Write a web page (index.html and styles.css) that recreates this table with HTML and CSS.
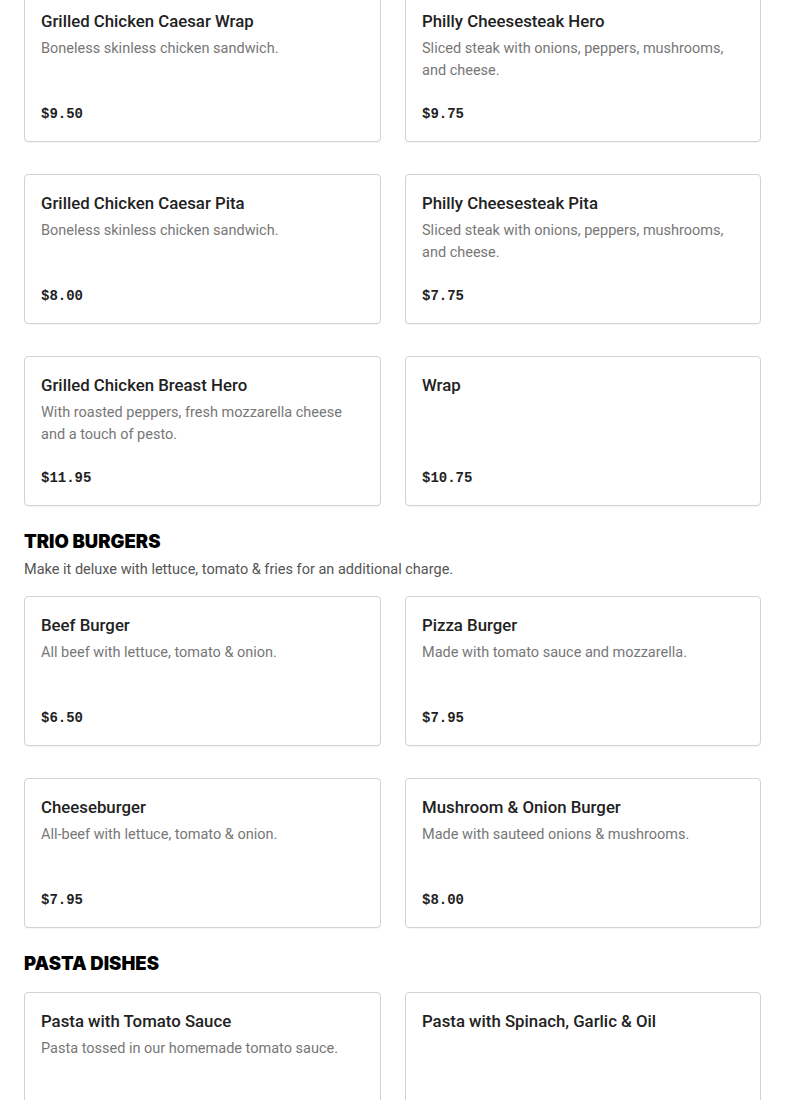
FILE: index.html
```html
<!DOCTYPE html>
<html lang="en">
<head>
<meta charset="utf-8">
<title>Menu</title>
<link rel="stylesheet" href="styles.css">
</head>
<body>
<main class="menu">
  <div class="grid grid-first">
    <div class="card"><h3 class="title">Grilled Chicken Caesar Wrap</h3><p class="desc">Boneless skinless chicken sandwich.</p><div class="price">$9.50</div></div>
    <div class="card"><h3 class="title">Philly Cheesesteak Hero</h3><p class="desc">Sliced steak with onions, peppers, mushrooms, and cheese.</p><div class="price">$9.75</div></div>
    <div class="card"><h3 class="title">Grilled Chicken Caesar Pita</h3><p class="desc">Boneless skinless chicken sandwich.</p><div class="price">$8.00</div></div>
    <div class="card"><h3 class="title">Philly Cheesesteak Pita</h3><p class="desc">Sliced steak with onions, peppers, mushrooms, and cheese.</p><div class="price">$7.75</div></div>
    <div class="card"><h3 class="title">Grilled Chicken Breast Hero</h3><p class="desc">With roasted peppers, fresh mozzarella cheese and a touch of pesto.</p><div class="price">$11.95</div></div>
    <div class="card"><h3 class="title">Wrap</h3><div class="price">$10.75</div></div>
  </div>

  <section class="section">
    <h2 class="section-title">TRIO BURGERS</h2>
    <p class="section-desc">Make it deluxe with lettuce, tomato &amp; fries for an additional charge.</p>
    <div class="grid">
      <div class="card"><h3 class="title">Beef Burger</h3><p class="desc">All beef with lettuce, tomato &amp; onion.</p><div class="price">$6.50</div></div>
      <div class="card"><h3 class="title">Pizza Burger</h3><p class="desc">Made with tomato sauce and mozzarella.</p><div class="price">$7.95</div></div>
      <div class="card"><h3 class="title">Cheeseburger</h3><p class="desc">All-beef with lettuce, tomato &amp; onion.</p><div class="price">$7.95</div></div>
      <div class="card"><h3 class="title">Mushroom &amp; Onion Burger</h3><p class="desc">Made with sauteed onions &amp; mushrooms.</p><div class="price">$8.00</div></div>
    </div>
  </section>

  <section class="section">
    <h2 class="section-title">PASTA DISHES</h2>
    <div class="grid">
      <div class="card"><h3 class="title">Pasta with Tomato Sauce</h3><p class="desc">Pasta tossed in our homemade tomato sauce.</p><div class="price">$9.00</div></div>
      <div class="card"><h3 class="title">Pasta with Spinach, Garlic &amp; Oil</h3><div class="price">$9.50</div></div>
    </div>
  </section>
</main>
</body>
</html>
```
FILE: styles.css
```css
* { box-sizing: border-box; }
body {
  margin: 0;
  background: #fff;
  font-family: "Roboto", "Inter", sans-serif;
  color: #222;
}
.menu {
  padding: 0 24px;
  width: 785px;
}
.grid {
  display: grid;
  grid-template-columns: 357px 356px;
  column-gap: 24px;
  row-gap: 32px;
}
.grid-first { margin-top: -8px; }
.card {
  border: 1px solid #d2d2d2;
  border-radius: 4px;
  min-height: 150px;
  padding: 16px;
  display: flex;
  flex-direction: column;
  box-shadow: 0 1px 1px rgba(0,0,0,0.04);
}
.title {
  margin: 0;
  font-size: 16.8px;
  line-height: 24px;
  font-weight: 500;
  color: #222;
}
.desc {
  margin: 5px 0 0;
  font-size: 14.5px;
  line-height: 22px;
  color: #777;
  padding-right: 20px;
}
.price {
  margin-top: auto;
  margin-bottom: -1px;
  font-family: "Liberation Mono", monospace;
  font-weight: 700;
  font-size: 14px;
  line-height: 24px;
  color: #222;
}
.section { margin-top: 23px; }
.section-title {
  margin: 0 0 17px;
  font-family: "Inter", sans-serif;
  font-size: 18.5px;
  line-height: 24px;
  font-weight: 900;
  color: #000;
}
.section-desc {
  margin: -11px 0 15px;
  font-size: 14.5px;
  line-height: 22px;
  color: #555;
}
```
